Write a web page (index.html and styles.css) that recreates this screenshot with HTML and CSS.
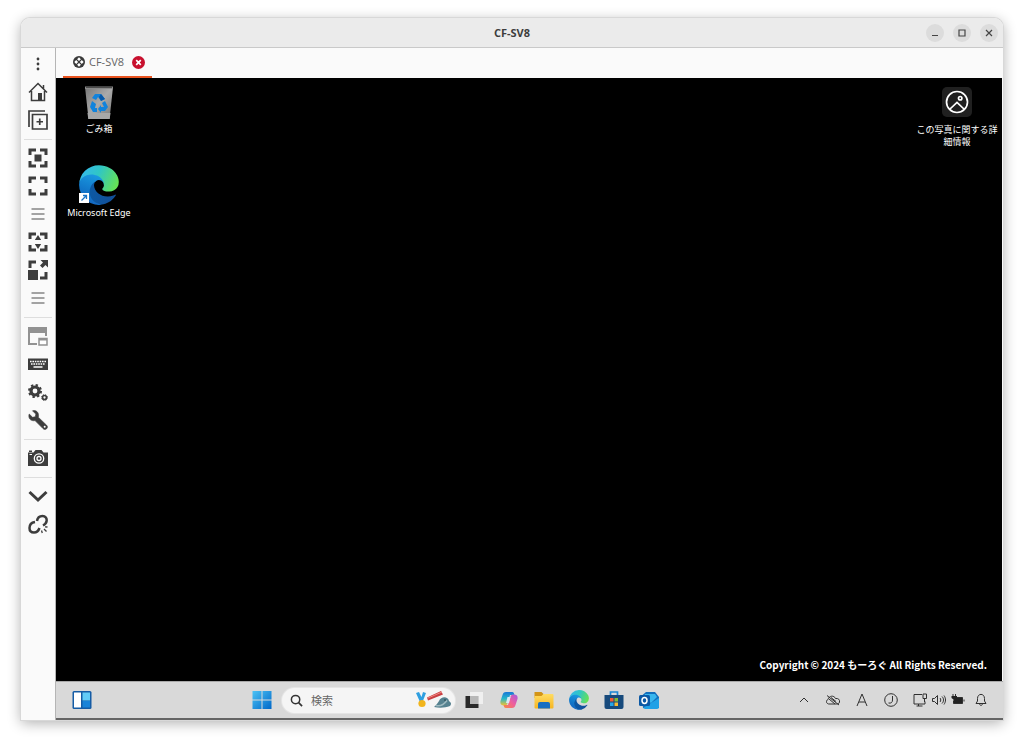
FILE: index.html
```html
<!DOCTYPE html>
<html lang="ja">
<head>
<meta charset="utf-8">
<meta name="viewport" content="width=device-width, initial-scale=1">
<title>CF-SV8</title>
<link rel="stylesheet" href="styles.css">
</head>
<body>
<svg class="defs" aria-hidden="true">
  <defs>
    <linearGradient id="edge-a" x1="0" y1="0" x2="1" y2="0"><stop offset="0" stop-color="#0c59a4"/><stop offset="1" stop-color="#124e98"/></linearGradient>
    <linearGradient id="edge-b" x1="0.6" y1="0" x2="0.3" y2="1"><stop offset="0" stop-color="#1b9de2"/><stop offset="0.6" stop-color="#1176c9"/><stop offset="1" stop-color="#1565c0"/></linearGradient>
    <linearGradient id="edge-c" x1="0" y1="0.3" x2="1" y2="0.6"><stop offset="0" stop-color="#35b8ee"/><stop offset="0.45" stop-color="#30c6c5"/><stop offset="1" stop-color="#66e254"/></linearGradient>
    <linearGradient id="win" x1="0" y1="0" x2="1" y2="1"><stop offset="0" stop-color="#4cc3f5"/><stop offset="1" stop-color="#0067c8"/></linearGradient>
    <linearGradient id="bin" x1="0" y1="0" x2="1" y2="1"><stop offset="0" stop-color="#777"/><stop offset="0.5" stop-color="#aaa"/><stop offset="1" stop-color="#777"/></linearGradient>
    <linearGradient id="cop-a" x1="0" y1="0" x2="0" y2="1"><stop offset="0" stop-color="#1877d8"/><stop offset="0.5" stop-color="#27b8c8"/><stop offset="1" stop-color="#f5c22d"/></linearGradient>
    <linearGradient id="cop-b" x1="1" y1="0" x2="0" y2="1"><stop offset="0" stop-color="#a55be0"/><stop offset="0.5" stop-color="#ef5f9c"/><stop offset="1" stop-color="#f88a3c"/></linearGradient>
    <linearGradient id="folder" x1="0" y1="0" x2="0" y2="1"><stop offset="0" stop-color="#ffdc62"/><stop offset="1" stop-color="#f6b521"/></linearGradient>
    <symbol id="edge" viewBox="4 4 258 258">
      <path fill="url(#edge-a)" d="M235.68 195.46a93.73 93.73 0 0 1-10.54 4.71 101.87 101.87 0 0 1-35.9 6.46c-47.32 0-88.54-32.55-88.54-74.32A31.48 31.48 0 0 1 117.13 105c-42.8 1.8-53.8 46.4-53.8 72.53 0 73.88 68.09 81.37 82.76 81.37 7.91 0 19.84-2.3 27-4.56l1.31-.44a128.34 128.34 0 0 0 66.6-52.8 4 4 0 0 0-5.32-5.64Z"/>
      <path fill="url(#edge-b)" d="M110.34 246.34A79.2 79.2 0 0 1 87.6 225a80.72 80.72 0 0 1 29.53-120c3.12-1.47 8.45-4.13 15.54-4a32.35 32.35 0 0 1 25.69 13 31.88 31.88 0 0 1 6.36 18.66c0-.21 24.46-79.6-80-79.6-43.9 0-80 41.66-80 78.21a130.15 130.15 0 0 0 12.11 56 128 128 0 0 0 156.38 67.11 75.55 75.55 0 0 1-62.78-8Z"/>
      <path fill="url(#edge-c)" d="M156.94 153.78c-.81 1.05-3.3 2.5-3.3 5.66 0 2.61 1.7 5.12 4.72 7.23 14.38 10 41.49 8.68 41.56 8.68a59.56 59.56 0 0 0 30.27-8.35A61.38 61.38 0 0 0 260.62 114c.26-22.41-8-37.31-11.34-43.91C228.09 28.76 182.35 5 132.62 5a128 128 0 0 0-128 126.2c.48-36.54 36.8-66.05 80-66.05 3.5 0 23.46.34 42 10.07 16.34 8.58 24.9 18.94 30.85 29.21 6.18 10.67 7.28 24.15 7.28 29.52s-2.74 13.33-7.81 19.83Z"/>
    </symbol>
    <symbol id="corners" viewBox="0 0 20 20"><path d="M2 7V2h6M12 2h6v5M18 13v5h-6M8 18H2v-5" fill="none" stroke="currentColor" stroke-width="3"/></symbol>
    <symbol id="lines" viewBox="0 0 20 20"><path d="M3.500 5h13M3.500 10h13M3.500 15h13" fill="none" stroke="#a3a3a3" stroke-width="2"/></symbol>
  </defs>
</svg>

<main class="window">
  <header class="titlebar">
    <h1 class="title">CF-SV8</h1>
    <div class="controls">
      <button class="control" aria-label="最小化"><svg viewBox="0 0 18 18"><path d="M6 11.500h6"/></svg></button>
      <button class="control" aria-label="最大化"><svg viewBox="0 0 18 18"><path d="M6 6h6v6H6z"/></svg></button>
      <button class="control" aria-label="閉じる"><svg viewBox="0 0 18 18"><path d="M6 6l6 6M12 6l-6 6"/></svg></button>
    </div>
  </header>
  <div class="body">
    <nav class="sidebar">
      <button class="tool" aria-label="メニュー"><svg viewBox="0 0 20 20"><g fill="currentColor"><circle cx="10" cy="5" r="1.400"/><circle cx="10" cy="10" r="1.400"/><circle cx="10" cy="15" r="1.400"/></g></svg></button>
      <button class="tool" aria-label="ホーム"><svg viewBox="0 0 20 20"><path d="M1 10.500L10 1.500l9 9M3.500 9v9.500h13V9M15.500 6.500V3" fill="none" stroke="currentColor" stroke-width="1.500"/><path d="M10 11h4v7.500h-4z" fill="currentColor"/></svg></button>
      <button class="tool" aria-label="新しい接続"><svg viewBox="0 0 20 20"><path d="M1 17V1h16M4.500 4.500h14.500V19H4.500zM11.750 8.500v6.500M8.500 11.750H15" fill="none" stroke="currentColor" stroke-width="1.700"/></svg></button>
      <hr class="divider">
      <button class="tool" aria-label="ウィンドウに合わせる"><svg viewBox="0 0 20 20"><use href="#corners"/><path d="M6.500 6.500h7v7h-7z" fill="currentColor"/></svg></button>
      <button class="tool" aria-label="全画面"><svg viewBox="0 0 20 20"><use href="#corners"/></svg></button>
      <button class="tool" aria-label="全画面オプション"><svg viewBox="0 0 20 20"><use href="#lines"/></svg></button>
      <button class="tool" aria-label="動的解像度"><svg viewBox="0 0 20 20"><use href="#corners"/><path d="M10 3l3.200 5H6.800zM10 17l3.200-5H6.800z" fill="currentColor"/></svg></button>
      <button class="tool" aria-label="拡大縮小"><svg viewBox="0 0 20 20"><path d="M2 8V2h6M18 12v6h-6" fill="none" stroke="currentColor" stroke-width="3"/><path d="M0 10h10v10H0zM12.500 0H20v7.500l-2.500-2.500-3 3-2.500-2.500 3-3z" fill="currentColor"/></svg></button>
      <button class="tool" aria-label="拡大縮小オプション"><svg viewBox="0 0 20 20"><use href="#lines"/></svg></button>
      <hr class="divider">
      <button class="tool disabled" aria-label="複数モニター" disabled><svg viewBox="0 0 20 20"><path d="M0 1h19v9h-2V7H2v10h7v2H0z" fill="currentColor"/><path d="M1 2h17v4H1z" fill="currentColor"/><path d="M11 12.500h8V19h-8z" fill="#fff" stroke="currentColor" stroke-width="1.500"/><path d="M11 12h8v2.500h-8z" fill="currentColor"/></svg></button>
      <button class="tool" aria-label="キーボード"><svg viewBox="0 0 20 20"><path d="M0 4.500h20v11.500H0z" fill="currentColor"/><path d="M2 7.500h16M3 10h14" stroke="#fff" stroke-width="1.400" stroke-dasharray="1.600 .8"/><path d="M5.500 13h9" stroke="#fff" stroke-width="1.500"/></svg></button>
      <button class="tool" aria-label="設定"><svg viewBox="0 0 20 20"><g fill="none" stroke="currentColor"><circle cx="7" cy="9" r="4" stroke-width="3.200"/><circle cx="7" cy="9" r="6" stroke-width="2" stroke-dasharray="2.350 2.350"/><circle cx="16.500" cy="15.500" r="2" stroke-width="1.700"/><circle cx="16.500" cy="15.500" r="3" stroke-width=".8" stroke-dasharray="1.200 1.200"/></g></svg></button>
      <button class="tool" aria-label="ツール"><svg viewBox="0 0 20 20"><path d="M4.500.8l3.300 3.300-.5 2.700-2.700.5L1.200 4C-.2 8 2.500 11.500 7 10.600l8 8c1 1 2.500 1.300 3.600.2 1.200-1.200 1-2.600 0-3.600l-8.300-8C11.500 2.500 8-.3 4.500.8z" fill="currentColor" stroke="currentColor" stroke-width=".6"/><circle cx="16.700" cy="16.800" r="1" fill="#fff"/></svg></button>
      <hr class="divider">
      <button class="tool" aria-label="スクリーンショット"><svg viewBox="0 0 20 20"><path d="M0 4.500h5.500L7.500 2h6l2 2.500H20V18H0zM1 2.500h3V4H1z" fill="currentColor"/><circle cx="11" cy="10.500" r="4.700" fill="none" stroke="#fff" stroke-width="1.300"/><circle cx="11" cy="10.500" r="2" fill="none" stroke="#fff" stroke-width="1.300"/><path d="M1.500 6.500h2.500" stroke="#fff"/></svg></button>
      <hr class="divider">
      <button class="tool" aria-label="折りたたむ"><svg viewBox="0 0 20 20"><path d="M1.500 6l8.500 8 8.500-8" fill="none" stroke="currentColor" stroke-width="3"/></svg></button>
      <button class="tool" aria-label="切断"><svg viewBox="0 0 20 20"><g fill="none" stroke="currentColor" stroke-width="2.500"><path d="M9 7c.5-3.500 2.500-5 5.500-5C17.500 2 19 4.500 18.600 7c-.3 2-1.500 3.400-3.600 4.500M7 8C4 8.500 1.500 10.500 1.500 14c0 3 2 4.500 4.500 4.500 2.500 0 4.500-1.500 5.500-4.500"/><path d="M13.500 16.500l.8 2.500M16 15l2.500 2.500M17 12.800l2.500.2" stroke-width="1.300"/></g></svg></button>
    </nav>
    <section class="remote">
      <div class="tabs" role="tablist">
        <div class="tab">
          <button class="tab-name" role="tab" aria-selected="true"><svg viewBox="0 0 12 12"><circle cx="6" cy="6" r="6" fill="#3a3a3a"/><g fill="#fff"><path d="M6 1.300L7.900 3.200 6 5.100 4.100 3.200zM6 6.900l1.900 1.900L6 10.700 4.100 8.800zM3.200 4.100L5.100 6 3.200 7.900 1.300 6zM8.800 4.100L10.700 6 8.800 7.900 6.900 6z"/></g></svg>CF-SV8</button>
          <button class="tab-close" aria-label="タブを閉じる"><svg viewBox="0 0 13 13"><circle cx="6.500" cy="6.500" r="6.500" fill="#c8102e"/><path d="M4.200 4.200l4.600 4.600M8.800 4.200L4.200 8.800" stroke="#fff" stroke-width="1.700"/></svg></button>
        </div>
      </div>
      <div class="desktop">
        <div class="shortcuts">
          <button class="shortcut"><svg class="bin" viewBox="0 0 30 36"><path d="M1 2h28l-3.500 32h-21z" fill="url(#bin)"/><path d="M3.500 28h23l-.8 6H4.300z" fill="#a8a8a8"/><path d="M1 1.500h28V4H1z" fill="#8a8a8a"/><path d="M2 2.500h26" stroke="#4c4c4c"/><g fill="#1183dc"><path d="M11 9l6 0 4 5-4 2-3-4-2 3-4-2z"/><path d="M21 16l3 6-3 4h-4v2l-3-4 3-4v2h3l-2-4z"/><path d="M8 16l4 3-1 4h2v4H9l-3-5z"/></g><path d="M17 9l4 5-4 2-2-4z" fill="#0859a8"/></svg><span>ごみ箱</span></button>
          <button class="shortcut"><svg class="edge-large" viewBox="0 0 40 40"><use href="#edge" width="40" height="40"/><path d="M0 28h10v10H0z" fill="#fff"/><path d="M2.500 35.500l5-5M4 30.500h3.500V34" fill="none" stroke="#1773c5" stroke-width="1.300"/></svg><span>Microsoft Edge</span></button>
        </div>
        <button class="shortcut photo-info"><svg class="photo" viewBox="0 0 30 30"><rect width="30" height="30" rx="5" fill="#202020"/><g fill="none" stroke="#fff" stroke-width="1.700"><circle cx="15" cy="15" r="10.500"/><circle cx="18.200" cy="11.200" r="1.700"/><path d="M7.500 22.500L15 15.500l7.500 7"/></g></svg><span>この写真に関する詳細情報</span></button>
        <p class="copyright">Copyright © 2024 もーろぐ All Rights Reserved.</p>
      </div>
      <footer class="taskbar">
        <button class="task" aria-label="ウィジェット"><svg viewBox="0 0 20 20"><rect x=".5" y="1" width="19" height="18" rx="1.500" fill="#155ca5"/><path d="M2 2.500h7v15H2z" fill="#fff"/><path d="M10.500 2.500H18v8h-7.500z" fill="#62ccf7"/><path d="M10.500 11H18v6.500h-7.500z" fill="#1983d8"/></svg></button>
        <div class="apps">
          <button class="task" aria-label="スタート"><svg viewBox="0 0 20 20"><path d="M.5 1h9v8.500h-9zM10.500 1h9v8.500h-9zM.5 10.500h9V19h-9zM10.500 10.500h9V19h-9z" fill="url(#win)"/></svg></button>
          <label class="search">
            <svg class="lens" viewBox="0 0 14 14"><circle cx="6" cy="6" r="4.500" fill="none" stroke="#333" stroke-width="1.600"/><path d="M9.300 9.300L13 13" stroke="#333" stroke-width="1.800"/></svg>
            <input type="text" placeholder="検索" aria-label="検索">
            <svg class="highlight" viewBox="0 0 36 18"><path d="M1 2l3-1 2.500 5L8 1l3 1-3.500 9H5z" fill="#2f9fe0"/><circle cx="7" cy="12.500" r="3.600" fill="#f2b51d"/><path d="M12 6.500L26 0l2 3.500-15 6z" fill="#c93f42"/><path d="M13 7l14-6" stroke="#f18a83"/><path d="M19 16c2-2 3-3 5-6 2-5 9-5 10 0 2.500 2 2.500 3 1 5-5 2-11 2-16 1z" fill="#55818f"/><path d="M21 14.500c4 1 8-1 11-5" fill="none" stroke="#9db9bf" stroke-width="1.500"/><circle cx="30" cy="9" r=".8" fill="#20383f"/></svg>
          </label>
          <button class="task" aria-label="タスクビュー"><svg viewBox="0 0 20 20"><path d="M1.500 6h13v12h-13z" fill="#292929"/><path d="M6 2h13v12H6z" fill="#f2f2f2" opacity=".88"/><path d="M6 6h8.500v8H6z" fill="#b8b8b8"/></svg></button>
          <button class="task" aria-label="Copilot"><svg viewBox="0 0 20 20"><path d="M7 2h6c2 0 2 1.500 2.500 3H11L8.500 13c-.5 2-1.500 2.500-3 2.500C2 15.500 1 14 1.500 11L3.500 5C4 3 5 2 7 2z" fill="url(#cop-a)"/><path d="M13 18H7c-2 0-2-1.500-2.500-3H9L11.500 7c.5-2 1.500-2.500 3-2.500C18 4.500 19 6 18.500 9l-2 6c-.5 2-1.500 3-3.500 3z" fill="url(#cop-b)"/><path d="M8.500 7h3L10 13H7z" fill="#d8e9f2"/></svg></button>
          <button class="task" aria-label="エクスプローラー"><svg viewBox="0 0 20 20"><path d="M.5 2h7l2 2v4h-9z" fill="#d39416"/><path d="M.5 6h7l2-2h9q1 0 1 1v12.500q0 1-1 1h-17q-1 0-1-1z" fill="url(#folder)"/><path d="M4 18.500V14q0-2 2-2h8q2 0 2 2v4.500z" fill="#176fc1"/></svg></button>
          <button class="task" aria-label="Microsoft Edge"><svg viewBox="0 0 20 20"><use href="#edge" width="20" height="20"/></svg></button>
          <button class="task" aria-label="Microsoft Store"><svg viewBox="0 0 20 20"><path d="M6.500 6V2h7v4" fill="none" stroke="#1b87d4" stroke-width="1.700"/><path d="M.5 5h19v12q0 2-2 2h-15q-2 0-2-2z" fill="#174a7c"/><path d="M6 8h3.500v3.500H6z" fill="#f15a35"/><path d="M10.500 8H14v3.500h-3.500z" fill="#81ba38"/><path d="M6 12.500h3.500V16H6z" fill="#27a7e8"/><path d="M10.500 12.500H14V16h-3.500z" fill="#f6ba32"/></svg></button>
          <button class="task" aria-label="Outlook"><svg viewBox="0 0 20 20"><path d="M3 5.500L7 2h9l4 5v11H4z" fill="#126fbd"/><path d="M6 4h10l2 3-6 6-7-5z" fill="#37b6ee"/><path d="M4 18l16-10v9q0 2-2 2H6z" fill="#20a1e6"/><rect x="0" y="5" width="11" height="11" rx="1.500" fill="#0c59a5"/><ellipse cx="5.500" cy="10.500" rx="2.500" ry="2.900" fill="none" stroke="#fff" stroke-width="1.500"/></svg></button>
        </div>
        <div class="tray">
          <button aria-label="隠れているインジケーター"><svg viewBox="0 0 14 14"><path d="M3 9l4-4 4 4"/></svg></button>
          <button aria-label="OneDrive"><svg viewBox="0 0 14 14"><path d="M4 11C0 11.500-.5 7.500 2 6.500 3 2.500 8 2 9.500 5.500c3-.5 4.500 1.500 4 3.500-.4 1.500-1 2-3 2zM1 2.500l12 9.500M3 6l6 5M5 4.500l5 4"/></svg></button>
          <button aria-label="入力モード"><svg viewBox="0 0 14 14"><path d="M2 13L7 1l5 12M4 9h6"/></svg></button>
          <button aria-label="IME"><svg viewBox="0 0 14 14"><circle cx="7" cy="7" r="6.300"/><path d="M8.500 3v4c0 2.500-1.500 3.500-4 3"/></svg></button>
          <div class="status">
            <button aria-label="ネットワーク"><svg viewBox="0 0 14 14"><path d="M9 1.500H1v9.500h11V8.500M3.500 13h6M5.500 11v2M10 1h3.500v4.500H10zM11.500 5.500V9"/></svg></button>
            <button aria-label="音量"><svg viewBox="0 0 14 14"><path d="M.5 5.500h2l3-3v9l-3-3h-2zM8 5c1 1 1 3 0 4M10 3.500c2 2 2 5 0 7M12 2.500c2 3 2 6 0 9"/></svg></button>
            <button aria-label="バッテリー"><svg viewBox="0 0 14 14"><path d="M3.500 4.500h8v6h-9V8h1z" fill="#222"/><path d="M13 6.500v2M2 1v2M4.500 1v2"/><path d="M.5 3H6v2L4 6.500v2H2.500v-2L.5 5z" fill="#222" stroke="none"/></svg></button>
          </div>
          <button aria-label="通知"><svg viewBox="0 0 14 14"><path d="M2 10.500L3.500 8V5.500C3.500 0 10.500 0 10.500 5.500V8l1.500 2.500zM5.500 10.500c0 2.500 3 2.500 3 0"/></svg></button>
        </div>
      </footer>
    </section>
  </div>
</main>
</body>
</html>
```
FILE: styles.css
```css
* { box-sizing: border-box; }
html, body { height: 100%; }
body {
  margin: 0;
  padding: 18px 21px 24px;
  background: #fff;
  color: #3d3d3d;
  font-family: "Noto Sans", "Noto Sans CJK JP", sans-serif;
}
button {
  border: 0;
  padding: 0;
  background: none;
  color: inherit;
  font: inherit;
}
svg { display: block; flex: none; }
.defs { position: absolute; width: 0; height: 0; }

.window {
  height: 100%;
  display: flex;
  flex-direction: column;
  overflow: hidden;
  border-radius: 9px 9px 0 0;
  background: #fafafa;
  box-shadow: 0 0 0 1px #d8d8d8, 0 3px 14px rgba(0, 0, 0, 0.32);
}
.titlebar {
  display: grid;
  grid-template-columns: 1fr auto 1fr;
  align-items: center;
  height: 30px;
  border-bottom: 1px solid #c9c9c9;
  background: #ebebeb;
}
.title {
  grid-column: 2;
  margin: 0;
  font-family: "Open Sans", sans-serif;
  font-size: 11px;
  line-height: 16px;
  font-weight: 700;
}
.controls {
  display: flex;
  justify-content: flex-end;
  gap: 9px;
  padding-right: 5px;
}
.control {
  width: 18px;
  height: 18px;
  border-radius: 50%;
  background: #dcdcdc;
}
.control path { fill: none; stroke: #444; stroke-width: 1.200; }

.body { flex: 1; display: flex; min-height: 0; }
.sidebar {
  display: flex;
  flex-direction: column;
  width: 34px;
  padding-top: 2px;
}
.tool {
  display: grid;
  place-items: center;
  height: 28px;
}
.tool svg { width: 20px; height: 20px; }
.disabled { color: #929292; }
.divider {
  width: 28px;
  height: 1px;
  margin: 5px auto 4px;
  border: 0;
  background: #dedede;
}

.remote {
  flex: 1;
  display: flex;
  flex-direction: column;
  min-width: 0;
  border-left: 1px solid #b5b5b5;
}
.tabs { display: flex; height: 30px; padding-left: 7px; }
.tab {
  display: flex;
  align-items: center;
  gap: 8px;
  padding: 0 7px 0 10px;
  border-bottom: 2px solid #e95420;
}
.tab-name {
  display: flex;
  align-items: center;
  gap: 4px;
  color: #666;
  font-family: "Open Sans", sans-serif;
  font-size: 11px;
  line-height: 16px;
}
.tab-name svg { width: 12px; height: 12px; }
.tab-close svg { width: 13px; height: 13px; }

.desktop {
  flex: 1;
  display: grid;
  grid-template-columns: auto 1fr auto;
  grid-template-rows: 1fr auto;
  min-height: 0;
  margin-right: 1px;
  padding: 7px 4px 8px;
  background: #000;
  color: #fff;
}
.shortcuts { display: flex; flex-direction: column; gap: 30px; }
.shortcut {
  display: flex;
  flex-direction: column;
  align-items: center;
  width: 78px;
  font-size: 9px;
  line-height: 12px;
}
.shortcuts .shortcut { gap: 2px; }
.bin { width: 30px; height: 36px; }
.edge-large { width: 40px; height: 40px; }
.photo-info {
  grid-column: 3;
  align-self: start;
  gap: 7px;
  width: 82px;
  padding-top: 2px;
}
.photo { width: 30px; height: 30px; }
.copyright {
  grid-column: 1 / -1;
  justify-self: end;
  margin: 0 11px 0 0;
  font-family: "Noto Sans CJK JP", sans-serif;
  font-size: 10px;
  line-height: 16px;
  font-weight: 700;
}

.taskbar {
  display: flex;
  align-items: center;
  height: 39px;
  padding: 0 15px 0 16px;
  border-top: 1px solid #a9a9a9;
  border-bottom: 2px solid #656565;
  background: #d9d9d9;
}
.task svg { width: 20px; height: 20px; }
.apps { display: flex; align-items: center; gap: 15px; margin-left: 160px; }
.search {
  display: flex;
  align-items: center;
  width: 173px;
  height: 25px;
  margin: 0 -6px 0 -5px;
  padding: 0 4px 0 8px;
  border-radius: 13px;
  background: #f5f5f5;
  box-shadow: 0 0 0 1px #e5e5e5;
}
.lens { width: 13px; height: 13px; }
.search input {
  flex: 1;
  min-width: 0;
  padding: 0 8px;
  border: 0;
  outline: 0;
  background: none;
  font: 11px/16px "Noto Sans CJK JP", sans-serif;
}
.search input::placeholder { color: #666; opacity: 1; }
.highlight { width: 36px; height: 18px; }
.tray { display: flex; align-items: center; gap: 15px; margin-left: auto; }
.tray svg {
  width: 14px;
  height: 14px;
  fill: none;
  stroke: #303030;
  stroke-width: 1;
}
.status { display: flex; gap: 5px; margin-right: -6px; }
```
